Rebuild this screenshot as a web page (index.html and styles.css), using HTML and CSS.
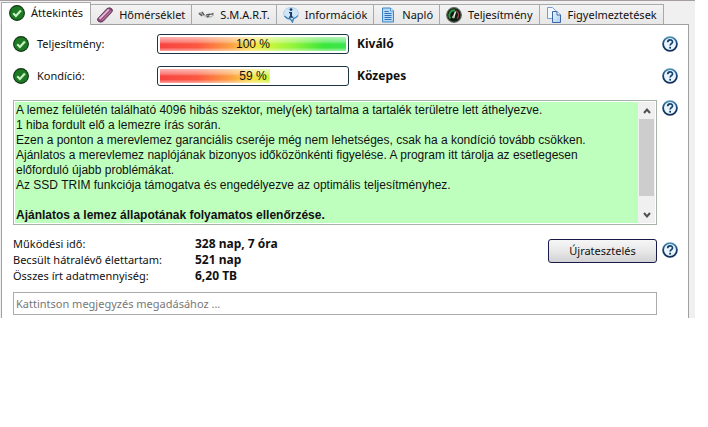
FILE: index.html
```html
<!DOCTYPE html>
<html lang="hu">
<head>
  <meta charset="UTF-8" />
  <meta name="viewport" content="width=device-width, initial-scale=1.0"/>
  <title>Áttekintés</title>
  <link rel="stylesheet" href="styles.css">
</head>
<body>
  <!-- Shared icons -->
  <svg class="defs" aria-hidden="true">
    <defs>
      <linearGradient id="rim" x1="0" y1="0" x2="0" y2="1">
        <stop offset="0" stop-color="#4a8fb5"/>
        <stop offset="0.5" stop-color="#173f6b"/>
        <stop offset="1" stop-color="#12305a"/>
      </linearGradient>
      <linearGradient id="page" x1="0" y1="0" x2="1" y2="1">
        <stop offset="0" stop-color="#eaf4ff"/>
        <stop offset="1" stop-color="#a9cdf2"/>
      </linearGradient>
    </defs>
    <symbol id="check" viewBox="0 0 16 16">
      <circle cx="8" cy="8" r="7.4" fill="#1d7a22" stroke="#12391a" stroke-width="1.1"/>
      <path d="M4.2 8.3l2.7 2.7 5-5.6" fill="none" stroke="#c9f5c4" stroke-width="2.2"/>
    </symbol>
    <symbol id="help" viewBox="0 0 16 16">
      <circle cx="8" cy="8" r="6.9" fill="#e9f6fd" stroke="url(#rim)" stroke-width="1.8"/>
      <path d="M5.7 6.3c0-3.2 4.8-3.1 4.8-.4 0 1.7-2.4 1.7-2.4 3.7" fill="none" stroke="#17406f" stroke-width="1.7"/>
      <rect x="7.2" y="10.8" width="1.8" height="1.8" fill="#17406f"/>
    </symbol>
  </svg>

  <main class="window">
    <nav class="tabs">
      <button class="tab active">
        <svg class="icon"><use href="#check"/></svg>
        Áttekintés
      </button>
      <button class="tab">
        <svg class="icon" viewBox="0 0 16 16">
          <path d="M.8 11.5L10 1.5q3-1.8 5 .5 1.3 2-.5 3.500L6 14.5q-2.500 1.300-4.500 0Q-.2 13.200.8 11.500z" fill="#8d4a77" stroke="#5b3050" stroke-width=".8"/>
          <path d="M2.5 12L12 2.3" stroke="#e6bcd6" stroke-width="1.8"/>
          <path d="M5 13.3L14.2 4" stroke="#c48bb0" stroke-width="1"/>
        </svg>
        Hőmérséklet
      </button>
      <button class="tab">
        <svg class="icon" viewBox="0 0 16 16">
          <path d="M0 6l4-1.5 3 2 2 1 3-1 4-1v3l-3 2-4 .5-3-2-3 .5z" fill="#b5b5b5"/>
          <path d="M1 6.5l3 2M4 5l2 3M9 10l6-3.500M8 8l4-1" stroke="#4b4b4b" stroke-width="1.2"/>
          <path d="M6 6l2 2M11 9l3-1" stroke="#f5f5f5" stroke-width="1"/>
        </svg>
        S.M.A.R.T.
      </button>
      <button class="tab">
        <svg class="icon" viewBox="0 0 16 16">
          <path d="M8 .5c4.2 0 7.500 2.500 7.500 5.800 0 3-2.500 5-5 5.700L9.500 15.500 7 12.200C3.200 12 .5 9.500.5 6.300.5 3 3.800.5 8 .5z" fill="#cfe5f6" stroke="#a9cbe4" stroke-width=".8"/>
          <path d="M1.5 9c1.5 2 3.500 2.800 6 3l2 3 1-3.500c2-.5 3.500-1.500 4.500-3" fill="none" stroke="#3e82bb" stroke-width="1.3"/>
          <circle cx="8" cy="2.6" r="1.4" fill="#123a66"/>
          <path d="M6 5h3v4.500h1.200v1.200H6V9.500h1.100V6.200H6z" fill="#123a66"/>
        </svg>
        Információk
      </button>
      <button class="tab">
        <svg class="icon" viewBox="0 0 16 16">
          <path d="M2.5 1h8l3 3v11h-11z" fill="#b5d8f6" stroke="#3f86c4"/>
          <path d="M10.5 1v3h3" fill="#e8f4ff" stroke="#3f86c4" stroke-width=".8"/>
          <path d="M4.5 4.5h4M4.5 6.5h7M4.5 8.5h7M4.5 10.5h7M4.5 12.5h7" stroke="#2f74b6"/>
        </svg>
        Napló
      </button>
      <button class="tab">
        <svg class="icon" viewBox="0 0 16 16">
          <circle cx="8" cy="8" r="7.3" fill="#101c12" stroke="#5d655f" stroke-width="1.2"/>
          <path d="M4.5 11.5A5 5 0 0 1 9 3.3" fill="none" stroke="#2d9a45" stroke-width="1.8"/>
          <path d="M9.5 3.5a5 5 0 0 1 1.5 8.3" fill="none" stroke="#934a3c" stroke-width="1.3"/>
          <path d="M7.2 11L9.6 4.5" stroke="#f2f2f2" stroke-width="1.5"/>
          <circle cx="7.5" cy="10" r="1.3" fill="#b8c0b8"/>
        </svg>
        Teljesítmény
      </button>
      <button class="tab">
        <svg class="icon" viewBox="0 0 16 16">
          <path d="M1.5.5h5l3 3v8h-8z" fill="#f1f7ff" stroke="#7b9dcb"/>
          <path d="M6.5 4.5H11L14.5 8v7.5h-8z" fill="url(#page)" stroke="#3b67a8"/>
          <path d="M11 4.5V8h3.5" fill="#fff" stroke="#3b67a8"/>
        </svg>
        Figyelmeztetések
      </button>
    </nav>

    <section class="panel">
      <!-- Status bars -->
      <div class="row status">
        <svg class="icon"><use href="#check"/></svg>
        <span class="label">Teljesítmény:</span>
        <div class="bar">
          <div class="bar-fill" style="--value: 100%"></div>
          <span class="bar-text">100 %</span>
        </div>
        <strong class="rating">Kiváló</strong>
        <button class="help" aria-label="Súgó"><svg class="icon"><use href="#help"/></svg></button>
      </div>
      <div class="row status">
        <svg class="icon"><use href="#check"/></svg>
        <span class="label">Kondíció:</span>
        <div class="bar">
          <div class="bar-fill" style="--value: 59%"></div>
          <span class="bar-text">59 %</span>
        </div>
        <strong class="rating">Közepes</strong>
        <button class="help" aria-label="Súgó"><svg class="icon"><use href="#help"/></svg></button>
      </div>

      <!-- Disk report -->
      <div class="row report">
        <div class="message">
          <div class="message-text">
            <p>A lemez felületén található 4096 hibás szektor, mely(ek) tartalma a tartalék területre lett áthelyezve.</p>
            <p>1 hiba fordult elő a lemezre írás során.</p>
            <p>Ezen a ponton a merevlemez garanciális cseréje még nem lehetséges, csak ha a kondíció tovább csökken.</p>
            <p>Ajánlatos a merevlemez naplójának bizonyos időközönkénti figyelése. A program itt tárolja az esetlegesen előforduló újabb problémákat.</p>
            <p>Az SSD TRIM funkciója támogatva és engedélyezve az optimális teljesítményhez.</p>
            <p class="advice">Ajánlatos a lemez állapotának folyamatos ellenőrzése.</p>
          </div>
          <div class="scrollbar">
            <button class="arrow" aria-label="Fel"><svg viewBox="0 0 8 8"><path d="M1 6l3-3.5L7 6"/></svg></button>
            <div class="track"><div class="thumb"></div></div>
            <button class="arrow" aria-label="Le"><svg viewBox="0 0 8 8"><path d="M1 2l3 3.5L7 2"/></svg></button>
          </div>
        </div>
        <button class="help" aria-label="Súgó"><svg class="icon"><use href="#help"/></svg></button>
      </div>

      <!-- Lifetime -->
      <div class="row lifetime">
        <dl class="stats">
          <dt>Működési idő:</dt><dd>328 nap, 7 óra</dd>
          <dt>Becsült hátralévő élettartam:</dt><dd>521 nap</dd>
          <dt>Összes írt adatmennyiség:</dt><dd>6,20 TB</dd>
        </dl>
        <button class="retest">Újratesztelés</button>
        <button class="help" aria-label="Súgó"><svg class="icon"><use href="#help"/></svg></button>
      </div>

      <div class="row">
        <input class="comment" type="text" aria-label="Megjegyzés" placeholder="Kattintson megjegyzés megadásához ...">
      </div>
    </section>
  </main>
</body>
</html>
```

FILE: styles.css
```css
* {
  box-sizing: border-box;
}

body {
  margin: 0;
  background: #fff;
  color: #111;
  font: 11px/16px "Noto Sans", "Open Sans", sans-serif;
}

button,
input {
  font: inherit;
  color: inherit;
}

.defs {
  position: absolute;
  width: 0;
  height: 0;
}

.icon {
  display: block;
  flex: none;
  width: 16px;
  height: 16px;
}

.window {
  margin-right: 13px;
  padding: 1px 6px 0 1px;
  background: #f0f0f0;
  border-top: 1px solid #a59da1;
}

/* Tabs */
.tabs {
  display: flex;
  align-items: flex-end;
  height: 22px;
}

.tab {
  display: flex;
  align-items: center;
  gap: 6px;
  height: 20px;
  padding: 0 6px;
  background: linear-gradient(#f3f3f3, #e7e7e7);
  border: 1px solid #a9a9a9;
  border-left: 0;
  border-bottom: 0;
  white-space: nowrap;
}

.tab.active {
  position: relative;
  height: 23px;
  margin-bottom: -1px;
  padding: 0 7px 2px;
  background: #fff;
  border-left: 1px solid #a9a9a9;
}

/* Panel */
.panel {
  padding: 3px 10px 3px 11px;
  background: #fff;
  border: 1px solid #a0a0a0;
  border-bottom: 0;
}

.row {
  display: flex;
  gap: 5px;
}

.help {
  padding: 0;
  background: none;
  border: 0;
}

.status {
  align-items: center;
  gap: 8px;
  height: 32px;
}

.status .label {
  width: 112px;
}

.rating {
  flex: 1;
  font-size: 12px;
}

.bar {
  display: grid;
  width: 192px;
  height: 20px;
  padding: 2px;
  border: 1px solid #1c3540;
  border-radius: 3px;
}

.bar-fill,
.bar-text {
  grid-area: 1 / 1;
}

.bar-fill {
  background:
    linear-gradient(rgba(255,255,255,0.6), rgba(255,255,255,0.3) 35%, rgba(255,255,255,0) 50%, rgba(255,255,255,0) 75%, rgba(255,255,255,0.5)),
    linear-gradient(90deg, #f84444, #fa5840 20%, #fba044 38%, #f6e444 50%, #c4f63c 60%, #90f43c 72%, #3ce63c 88%, #3ce650);
  clip-path: inset(0 calc(100% - var(--value)) 0 0);
}

.bar-text {
  z-index: 1;
  font: 12px/14px "Liberation Sans", Arial, sans-serif;
  text-align: center;
}

/* Disk report */
.report {
  align-items: flex-start;
  margin-top: 8px;
}

.message {
  display: flex;
  flex: 1;
  padding: 1px;
  border: 1px solid #a9b3a9;
}

.message-text {
  flex: 1;
  padding: 1px 12px 0 1px;
  background: #beffbe;
  font: 12px/15px "Liberation Sans", Arial, sans-serif;
}

.message-text p {
  margin: 0;
}

.message-text .advice {
  margin-top: 15px;
  font-weight: bold;
}

.scrollbar {
  display: flex;
  flex-direction: column;
  width: 17px;
  background: #f0f0f0;
}

.arrow {
  display: flex;
  align-items: center;
  justify-content: center;
  height: 17px;
  padding: 0;
  background: none;
  border: 0;
}

.arrow svg {
  width: 8px;
  height: 8px;
  fill: none;
  stroke: #505050;
  stroke-width: 2;
}

.track {
  flex: 1;
}

.thumb {
  height: 88%;
  margin: 0 1px;
  background: #cdcdcd;
}

/* Lifetime */
.lifetime {
  align-items: flex-start;
  margin-top: 11px;
}

.lifetime .help {
  margin-top: 6px;
}

.stats {
  display: grid;
  flex: 1;
  grid-template-columns: 182px 1fr;
  margin: 0;
}

.stats dd {
  margin: 0;
  font-size: 12px;
  font-weight: bold;
}

.retest {
  width: 109px;
  height: 24px;
  margin-top: 3px;
  padding: 0;
  background: linear-gradient(#f6f6f6, #e8e8e8 50%, #d2d2d6);
  border: 1px solid #1a1a4a;
  border-radius: 3px;
}

.comment {
  flex: 1;
  height: 23px;
  margin: 8px 21px 0 0;
  padding: 0 2px;
  background: #fff;
  border: 1px solid #ababab;
}

.comment::placeholder {
  color: #777;
}
```
